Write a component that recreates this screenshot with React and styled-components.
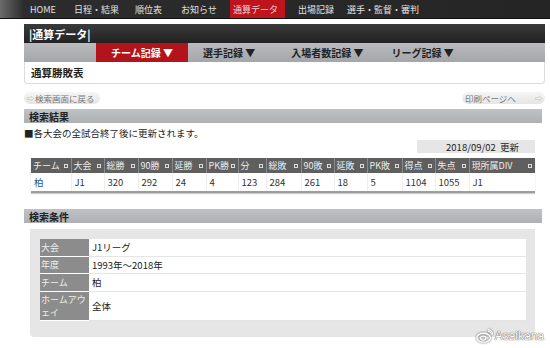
import React from "react";
import styled, { createGlobalStyle } from "styled-components";

const GlobalStyle = createGlobalStyle`
  body {
    margin: 0;
    background: #fff;
    font-family: "Noto Sans CJK JP", "Noto Sans", sans-serif;
    color: #222;
  }
`;

const navItems = [
  { label: "HOME", w: 44 },
  { label: "日程・結果", w: 61 },
  { label: "順位表", w: 46 },
  { label: "お知らせ", w: 49 },
  { label: "通算データ", w: 55, active: true },
  { label: "出場記録", w: 49, ml: 13 },
  { label: "選手・監督・審判", w: 80 },
];

const subTabs = [
  { label: "チーム記録 ▼", active: true, mr: 15 },
  { label: "選手記録 ▼", mr: 36 },
  { label: "入場者数記録 ▼", mr: 28 },
  { label: "リーグ記録 ▼", mr: 0 },
];

const columns = [
  ["チーム", 40],
  ["大会", 33],
  ["総勝", 34],
  ["90勝", 34],
  ["延勝", 34],
  ["PK勝", 32],
  ["分", 28],
  ["総敗", 35],
  ["90敗", 33],
  ["延敗", 33],
  ["PK敗", 35],
  ["得点", 33],
  ["失点", 34],
  ["現所属DIV", 66],
];

const row = ["柏", "J1", "320", "292", "24", "4", "123", "284", "261", "18", "5", "1104", "1055", "J1"];

const conditions = [
  ["大会", "J1リーグ", 17],
  ["年度", "1993年〜2018年", 17],
  ["チーム", "柏", 18],
  ["ホームアウェイ", "全体", 29],
];

const App = () => {
  return (
    <Page>
      <GlobalStyle />
      <TopNav>
        {navItems.map((item) => (
          <NavItem key={item.label} $active={item.active} $w={item.w} $ml={item.ml || 0}>
            {item.label}
          </NavItem>
        ))}
      </TopNav>

      <Main>
        <SectionHeader>|通算データ|</SectionHeader>
        <SubNav>
          {subTabs.map((tab) => (
            <SubTab key={tab.label} $active={tab.active} $mr={tab.mr}>
              {tab.label}
            </SubTab>
          ))}
        </SubNav>
        <TitlePanel>通算勝敗表</TitlePanel>

        <LinkRow>
          <PillLink>
            <ArrowDot>⇨</ArrowDot>検索画面に戻る
          </PillLink>
          <PillLink $wide>
            印刷ページへ<ArrowDot $right>⇨</ArrowDot>
          </PillLink>
        </LinkRow>

        <BarTitle>検索結果</BarTitle>
        <Note>■各大会の全試合終了後に更新されます。</Note>
        <DateRow>
          <DateBox>2018/09/02{"\u00a0\u00a0"}更新</DateBox>
        </DateRow>

        <ResultTable>
          <colgroup>
            {columns.map(([name, w]) => (
              <col key={name} style={{ width: w }} />
            ))}
          </colgroup>
          <thead>
            <tr>
              {columns.map(([name]) => (
                <HeadCell key={name}>
                  {name}
                  <SortMark />
                </HeadCell>
              ))}
            </tr>
          </thead>
          <tbody>
            <tr>
              {row.map((v, i) => (
                <DataCell key={i} $link={i === 0}>
                  {v}
                </DataCell>
              ))}
            </tr>
          </tbody>
        </ResultTable>

        <BarTitle $top={16}>検索条件</BarTitle>
        <CondPanel>
          <CondTable>
            <tbody>
              {conditions.map(([k, v, h]) => (
                <tr key={k} style={{ height: h }}>
                  <CondLabel>{k}</CondLabel>
                  <CondValue>{v}</CondValue>
                </tr>
              ))}
            </tbody>
          </CondTable>
        </CondPanel>
      </Main>

      <Watermark>
        <WeiboIcon viewBox="0 0 20 16">
          <ellipse cx="9" cy="10" rx="8" ry="5.2" fill="none" stroke="#fff" strokeWidth="1.6" />
          <ellipse cx="8.5" cy="10.5" rx="3.2" ry="2.4" fill="none" stroke="#fff" strokeWidth="1.3" />
          <path d="M14 2.5 a4 4 0 0 1 4 4" fill="none" stroke="#fff" strokeWidth="1.4" />
          <path d="M14 0.8 a6 6 0 0 1 5.6 5.6" fill="none" stroke="#fff" strokeWidth="1.2" />
        </WeiboIcon>
        Asaikana
      </Watermark>
    </Page>
  );
};

export default App;

const Page = styled.div`
  position: relative;
  width: 550px;
  height: 348px;
  overflow: hidden;
`;

const TopNav = styled.div`
  display: flex;
  align-items: stretch;
  height: 19px;
  padding-left: 30px;
  background: linear-gradient(to right, #6a6a6a 0, #2c2c2c 24px, #252525 100%);
  border-bottom: 1px solid #111;
  box-sizing: border-box;
`;

const NavItem = styled.div`
  display: flex;
  align-items: center;
  width: ${(p) => p.$w}px;
  margin-left: ${(p) => p.$ml}px;
  padding-left: ${(p) => (p.$active ? "3px" : "0")};
  box-sizing: border-box;
  white-space: nowrap;
  background: ${(p) => (p.$active ? "#c0141c" : "transparent")};
  color: ${(p) => (p.$active ? "#f3d3d3" : "#e0e0e0")};
  font-size: 9px;
`;

const Main = styled.div`
  display: flex;
  flex-direction: column;
  margin: 5px 5px 0 24px;
`;

const SectionHeader = styled.div`
  height: 19px;
  display: flex;
  align-items: center;
  padding-left: 5px;
  background: linear-gradient(#3a3a3a, #222);
  color: #fff;
  font-weight: bold;
  font-size: 11px;
`;

const SubNav = styled.div`
  height: 19px;
  display: flex;
  align-items: stretch;
  padding-left: 72px;
  background: linear-gradient(#b9bbbe, #a4a6a9);
`;

const SubTab = styled.div`
  display: flex;
  align-items: center;
  justify-content: center;
  width: ${(p) => (p.$active ? "92px" : "auto")};
  margin-right: ${(p) => p.$mr}px;
  background: ${(p) => (p.$active ? "#b3141c" : "transparent")};
  color: ${(p) => (p.$active ? "#fff" : "#222")};
  font-weight: bold;
  font-size: 10px;
  white-space: nowrap;
`;

const TitlePanel = styled.div`
  height: 21px;
  display: flex;
  align-items: center;
  padding-left: 6px;
  border: 1px solid #dcdcdc;
  border-top: none;
  border-radius: 0 0 4px 4px;
  font-size: 10.5px;
  font-weight: bold;
  color: #222;
`;

const LinkRow = styled.div`
  display: flex;
  justify-content: space-between;
  margin-top: 8px;
`;

const PillLink = styled.div`
  display: flex;
  align-items: center;
  height: 12px;
  width: ${(p) => (p.$wide ? "83px" : "76px")};
  padding: 0 3px;
  box-sizing: border-box;
  border-radius: 6px;
  background: linear-gradient(#f6f6f6, #e4e4e4);
  color: #777;
  font-size: 8.5px;
  white-space: nowrap;
  justify-content: ${(p) => (p.$wide ? "space-between" : "flex-start")};
`;

const ArrowDot = styled.span`
  font-size: 7px;
  color: #999;
  margin-right: ${(p) => (p.$right ? "0" : "1px")};
`;

const BarTitle = styled.div`
  height: 14px;
  width: 518px;
  margin-top: ${(p) => (p.$top ? p.$top : 5)}px;
  display: flex;
  align-items: center;
  padding-left: 5px;
  box-sizing: border-box;
  background: linear-gradient(#bfc2c5, #aeb1b4);
  font-size: 10px;
  font-weight: bold;
  color: #222;
`;

const Note = styled.div`
  margin-top: 4px;
  font-size: 9.5px;
  line-height: 13px;
  color: #222;
`;

const DateRow = styled.div`
  display: flex;
  justify-content: flex-end;
  margin-right: 10px;
`;

const DateBox = styled.div`
  width: 118px;
  height: 13px;
  display: flex;
  align-items: center;
  justify-content: flex-end;
  padding-right: 16px;
  box-sizing: border-box;
  background: #e6e6e6;
  font-size: 9.5px;
  color: #222;
  white-space: nowrap;
`;

const ResultTable = styled.table`
  margin: 5px 0 0 7px;
  width: 504px;
  table-layout: fixed;
  border-collapse: collapse;
  border-bottom: 2px solid #9d9d9d;
  box-shadow: 0 1px 1px #ccc;
`;

const HeadCell = styled.th`
  position: relative;
  height: 15px;
  padding: 0 0 0 2px;
  background: #5f5f5f;
  color: #eee;
  font-weight: normal;
  font-size: 9px;
  text-align: left;
  white-space: nowrap;
  overflow: hidden;
  border-right: 1px solid #8a8a8a;
  &:last-child {
    border-right: none;
  }
`;

const SortMark = styled.span`
  position: absolute;
  right: 3px;
  top: 6px;
  width: 2px;
  height: 2px;
  border: 1px solid #ddd;
`;

const DataCell = styled.td`
  height: 18px;
  padding: 0 0 0 3px;
  font-size: 9.5px;
  color: ${(p) => (p.$link ? "#1d5a94" : "#333")};
  border-right: 1px solid #eee;
  &:last-child {
    border-right: none;
  }
`;

const CondPanel = styled.div`
  margin: 6px 0 0 6px;
  width: 505px;
  padding: 10px 9px 16px 10px;
  box-sizing: border-box;
  background: #e6e6e6;
  border-radius: 0 0 4px 4px;
`;

const CondTable = styled.table`
  width: 100%;
  border-collapse: collapse;
  background: #fff;
`;

const CondLabel = styled.td`
  width: 47px;
  padding: 0 1px;
  background: #8c8c8c;
  color: #eee;
  font-size: 9px;
  line-height: 13px;
  border-bottom: 1px solid #fff;
`;

const CondValue = styled.td`
  padding: 0 3px;
  font-size: 9.5px;
  color: #222;
  border-bottom: 1px solid #e4e4e4;
`;

const Watermark = styled.div`
  position: absolute;
  right: 6px;
  bottom: 5px;
  display: flex;
  align-items: center;
  gap: 2px;
  color: #fff;
  font-family: "Liberation Sans", Arial, sans-serif;
  font-size: 12px;
  text-shadow: 0 0 1px #555, 0 0 1px #555;
`;

const WeiboIcon = styled.svg`
  width: 17px;
  height: 14px;
  filter: drop-shadow(0 0 1px #555);
`;
